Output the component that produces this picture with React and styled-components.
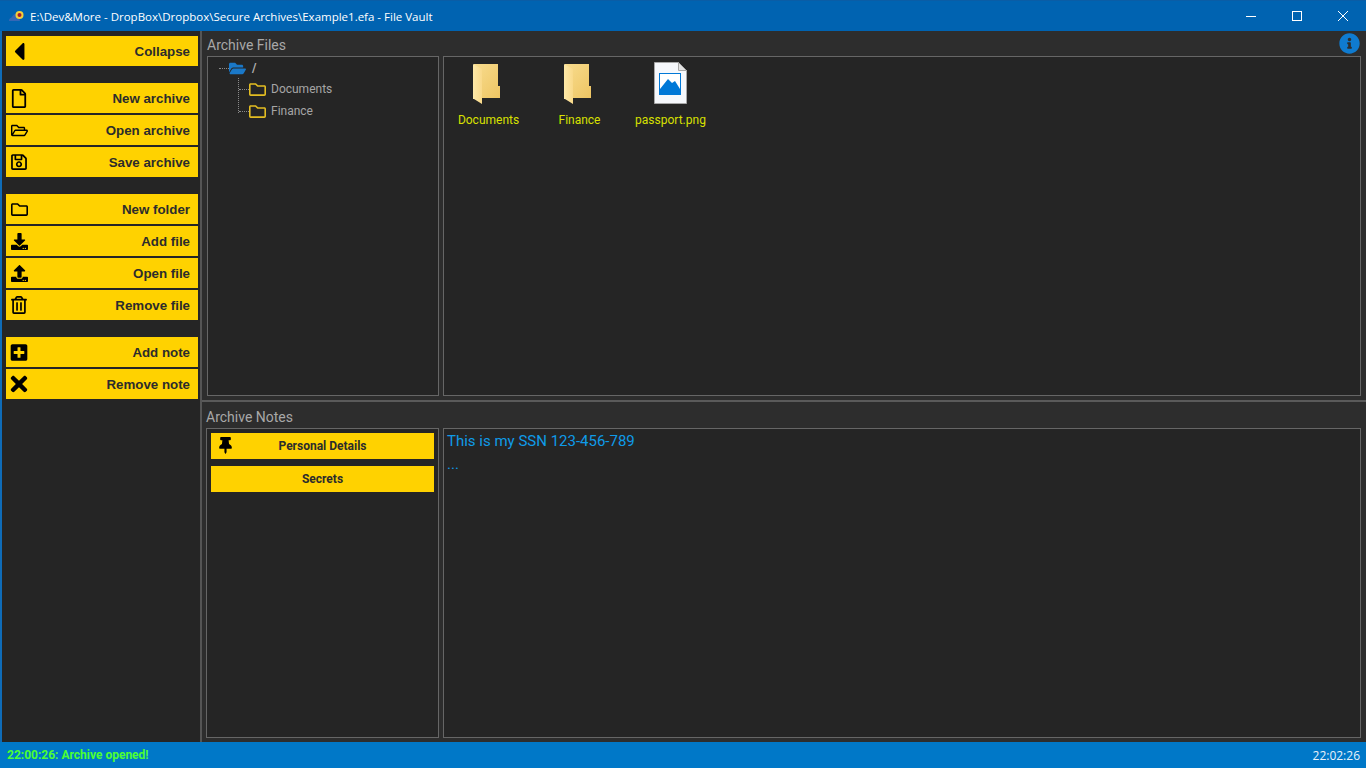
import React from "react";
import styled, { createGlobalStyle } from "styled-components";
import {
  FaCaretLeft,
  FaRegFile,
  FaRegFolderOpen,
  FaRegSave,
  FaRegFolder,
  FaDownload,
  FaUpload,
  FaRegTrashAlt,
  FaPlusSquare,
  FaTimes,
  FaThumbtack,
  FaInfoCircle,
  FaFolderOpen,
} from "react-icons/fa";

const Global = createGlobalStyle`
  html, body { margin: 0; padding: 0; background: #252525; overflow: hidden; }
  * { box-sizing: border-box; }
`;

const groups = [
  [
    { icon: FaRegFile, size: 19, label: "New archive" },
    { icon: FaRegFolderOpen, size: 17, label: "Open archive" },
    { icon: FaRegSave, size: 18, label: "Save archive" },
  ],
  [
    { icon: FaRegFolder, size: 17, label: "New folder" },
    { icon: FaDownload, size: 17, label: "Add file" },
    { icon: FaUpload, size: 17, label: "Open file" },
    { icon: FaRegTrashAlt, size: 18, label: "Remove file" },
  ],
  [
    { icon: FaPlusSquare, size: 19, label: "Add note" },
    { icon: FaTimes, size: 24, label: "Remove note" },
  ],
];

function BigFolder() {
  return (
    <svg width="28" height="40" viewBox="0 0 28 40">
      <defs>
        <linearGradient id="folderBack" x1="0" x2="1" y1="0" y2="1">
          <stop offset="0" stopColor="#f8dc8e" />
          <stop offset="1" stopColor="#eec563" />
        </linearGradient>
        <linearGradient id="folderFlap" x1="0" x2="1" y1="0" y2="0">
          <stop offset="0" stopColor="#fee9a8" />
          <stop offset="1" stopColor="#f9d98a" />
        </linearGradient>
      </defs>
      <path d="M1 0H25V22H27V34H9V27H1Z" fill="url(#folderBack)" />
      <path d="M0 0L9 5V40L1 35H0Z" fill="url(#folderFlap)" />
    </svg>
  );
}

function BigImageFile() {
  return (
    <svg width="33" height="42" viewBox="0 0 33 42">
      <path d="M.5.5H24.5L32.5 8.500V41.500H.5Z" fill="#f6f8fc" stroke="#a8a8a8" />
      <path d="M24.5.5V8.500H32.5Z" fill="#e3e3e3" stroke="#a8a8a8" />
      <rect x="5.500" y="11.500" width="21" height="21" fill="#fff" stroke="#0078d7" />
      <path d="M6 32V27L14 17L18 21L21 19L26 27V32Z" fill="#0078d7" />
    </svg>
  );
}

export default function App() {
  return (
    <Windowed>
      <Global />
      <TitleBar>
        <AppIcon viewBox="0 0 16 12">
          <path d="M0 11C0 8 2 8 3 7C4 4 7 3 9 4L11 11Z" fill="#3567b5" />
          <circle cx="10.500" cy="5" r="4" fill="#f4cf3a" />
          <circle cx="10.500" cy="5" r="2" fill="#a81c2c" />
        </AppIcon>
        <TitleText>E:\Dev&amp;More - DropBox\Dropbox\Secure Archives\Example1.efa - File Vault</TitleText>
        <WinControls>
          <WinButton>
            <svg width="10" height="10" viewBox="0 0 10 10"><path d="M0 5.500H10" stroke="#fff" /></svg>
          </WinButton>
          <WinButton>
            <svg width="10" height="10" viewBox="0 0 10 10"><rect x=".5" y=".5" width="9" height="9" fill="none" stroke="#fff" /></svg>
          </WinButton>
          <WinButton>
            <svg width="10" height="10" viewBox="0 0 10 10"><path d="M0 0L10 10M10 0L0 10" stroke="#fff" /></svg>
          </WinButton>
        </WinControls>
      </TitleBar>

      <Body>
        <Sidebar>
          <SideButton>
            <IconSlot><FaCaretLeft size={29} /></IconSlot>
            Collapse
          </SideButton>
          {groups.map((group) => (
            <SideGroup key={group[0].label}>
              {group.map((item) => (
                <SideButton key={item.label}>
                  <IconSlot><item.icon size={item.size} /></IconSlot>
                  {item.label}
                </SideButton>
              ))}
            </SideGroup>
          ))}
        </Sidebar>

        <Content>
          <FilesSection>
            <SectionTitle>
              Archive Files
              <InfoIcon><FaInfoCircle size={21} /></InfoIcon>
            </SectionTitle>
            <Panels>
              <TreePanel>
                <RootRow>
                  <HDots $width={10} />
                  <FaFolderOpen size={17} color="#1a78c8" />
                  <RootName>/</RootName>
                </RootRow>
                <TreeChildren>
                  <TreeRow>
                    <HDots $width={10} />
                    <FaRegFolder size={17} color="#e3bd22" />
                    <TreeName>Documents</TreeName>
                  </TreeRow>
                  <TreeRow>
                    <HDots $width={10} />
                    <FaRegFolder size={17} color="#e3bd22" />
                    <TreeName>Finance</TreeName>
                  </TreeRow>
                </TreeChildren>
              </TreePanel>
              <FilesPanel>
                <FileItem>
                  <FileIcon $nudge={4}><BigFolder /></FileIcon>
                  <FileName>Documents</FileName>
                </FileItem>
                <FileItem>
                  <FileIcon $nudge={4}><BigFolder /></FileIcon>
                  <FileName>Finance</FileName>
                </FileItem>
                <FileItem>
                  <FileIcon><BigImageFile /></FileIcon>
                  <FileName>passport.png</FileName>
                </FileItem>
              </FilesPanel>
            </Panels>
          </FilesSection>

          <NotesSection>
            <SectionTitle>Archive Notes</SectionTitle>
            <NotesPanels>
              <NoteList>
                <NoteButton>
                  <PinSlot><FaThumbtack size={17} /></PinSlot>
                  Personal Details
                </NoteButton>
                <NoteButton>Secrets</NoteButton>
              </NoteList>
              <NoteBody>
                <NoteLine>This is my SSN 123-456-789</NoteLine>
                <NoteLine>...</NoteLine>
              </NoteBody>
            </NotesPanels>
          </NotesSection>
        </Content>
      </Body>

      <StatusBar>
        <StatusMessage>22:00:26: Archive opened!</StatusMessage>
        <Clock>22:02:26</Clock>
      </StatusBar>
    </Windowed>
  );
}

const uiFont = `Roboto, "Noto Sans", sans-serif`;
const buttonFont = `"Liberation Sans", Arial, sans-serif`;

const Windowed = styled.div`
  width: 1366px;
  height: 768px;
  display: flex;
  flex-direction: column;
  background: #252525;
  overflow: hidden;
`;

const TitleBar = styled.div`
  height: 31px;
  flex: none;
  display: flex;
  align-items: center;
  padding-left: 9px;
  background: #0063b1;
  border-top: 1px solid #0a5da6;
`;

const AppIcon = styled.svg`
  width: 16px;
  height: 12px;
  margin-right: 5px;
`;

const TitleText = styled.div`
  flex: 1;
  font: 11.500px "Open Sans", sans-serif;
  color: #fff;
  white-space: nowrap;
`;

const WinControls = styled.div`
  display: flex;
  height: 30px;
`;

const WinButton = styled.div`
  width: 46px;
  display: flex;
  align-items: center;
  justify-content: center;
`;

const Body = styled.div`
  flex: 1;
  display: flex;
  min-height: 0;
  border-left: 2px solid #0f6cb8;
`;

const Sidebar = styled.div`
  width: 198px;
  flex: none;
  padding: 5px 2px 0 4px;
  background: #252525;
`;

const SideGroup = styled.div`
  display: flex;
  flex-direction: column;
  gap: 2px;
  margin-top: 17px;
`;

const SideButton = styled.div`
  height: 30px;
  position: relative;
  display: flex;
  align-items: center;
  justify-content: flex-end;
  padding-right: 8px;
  background: #ffd200;
  color: #2c2c2c;
  font: bold 13.300px ${buttonFont};
  white-space: nowrap;
`;

const IconSlot = styled.span`
  position: absolute;
  left: 4px;
  top: 0;
  bottom: 0;
  width: 18px;
  display: flex;
  align-items: center;
  justify-content: center;
  color: #000;
`;

const Content = styled.div`
  flex: 1;
  min-width: 0;
  display: flex;
  flex-direction: column;
  border-left: 2px solid #555;
  background: #2d2d2d;
`;

const FilesSection = styled.div`
  height: 371px;
  flex: none;
  display: flex;
  flex-direction: column;
  padding: 3px 5px 4px 5px;
  border-bottom: 2px solid #5a5a5a;
`;

const NotesSection = styled.div`
  flex: 1;
  min-height: 0;
  display: flex;
  flex-direction: column;
  padding: 4px 5px 4px 4px;
`;

const SectionTitle = styled.div`
  height: 22px;
  flex: none;
  position: relative;
  display: flex;
  align-items: center;
  font: 14px ${uiFont};
  color: #a8a8a8;
`;

const InfoIcon = styled.span`
  position: absolute;
  right: 1px;
  top: -1px;
  color: #0f7bd0;
  display: flex;
`;

const Panels = styled.div`
  flex: 1;
  min-height: 0;
  display: grid;
  grid-template-columns: 232px 918px;
  column-gap: 4px;
`;

const NotesPanels = styled(Panels)`
  grid-template-columns: 233px 918px;
`;

const TreePanel = styled.div`
  background: #252525;
  border: 1px solid #666;
  padding: 1px 0 0 11px;
`;

const RootRow = styled.div`
  height: 20px;
  display: flex;
  align-items: center;
`;

const HDots = styled.span`
  width: ${(p) => p.$width}px;
  flex: none;
  border-top: 1px dotted #8a8a8a;
`;

const RootName = styled.span`
  margin-left: 6px;
  font: bold 12px ${uiFont};
  color: #b0b0b0;
`;

const TreeChildren = styled.div`
  margin-left: 19px;
  border-left: 1px dotted #8a8a8a;
  height: 35px;
`;

const TreeRow = styled.div`
  height: 22px;
  display: flex;
  align-items: center;
`;

const TreeName = styled.span`
  margin-left: 5px;
  font: 12px ${uiFont};
  color: #a5a5a5;
`;

const FilesPanel = styled.div`
  background: #252525;
  border: 1px solid #666;
  padding: 4px 0 0 0;
  display: flex;
  align-items: flex-start;
`;

const FileItem = styled.div`
  width: 91px;
  padding-right: 2px;
  display: flex;
  flex-direction: column;
  align-items: center;
`;

const FileIcon = styled.div`
  height: 44px;
  display: flex;
  align-items: flex-end;
  padding-bottom: 1px;
  padding-right: ${(p) => p.$nudge || 0}px;
`;

const FileName = styled.div`
  margin-top: 8px;
  font: 12px ${uiFont};
  color: #d8e000;
  white-space: nowrap;
`;

const NoteList = styled.div`
  background: #252525;
  border: 1px solid #666;
  padding: 4px;
  display: flex;
  flex-direction: column;
  gap: 7px;
`;

const NoteButton = styled.div`
  height: 26px;
  position: relative;
  display: flex;
  align-items: center;
  justify-content: center;
  background: #ffd200;
  color: #2c2c2c;
  font: bold 12px ${uiFont};
`;

const PinSlot = styled.span`
  position: absolute;
  left: 6px;
  top: 4px;
  display: flex;
  color: #000;
`;

const NoteBody = styled.div`
  background: #252525;
  border: 1px solid #666;
  padding: 1px 3px;
`;

const NoteLine = styled.div`
  height: 23px;
  font: 15px/22px ${uiFont};
  color: #0f9be8;
`;

const StatusBar = styled.div`
  height: 26px;
  flex: none;
  display: flex;
  align-items: center;
  justify-content: space-between;
  padding: 0 6px 0 7px;
  background: #0078c8;
`;

const StatusMessage = styled.div`
  font: bold 12px ${uiFont};
  color: #4cff32;
`;

const Clock = styled.div`
  font: 12px "Open Sans", sans-serif;
  color: #e8f2fa;
`;
